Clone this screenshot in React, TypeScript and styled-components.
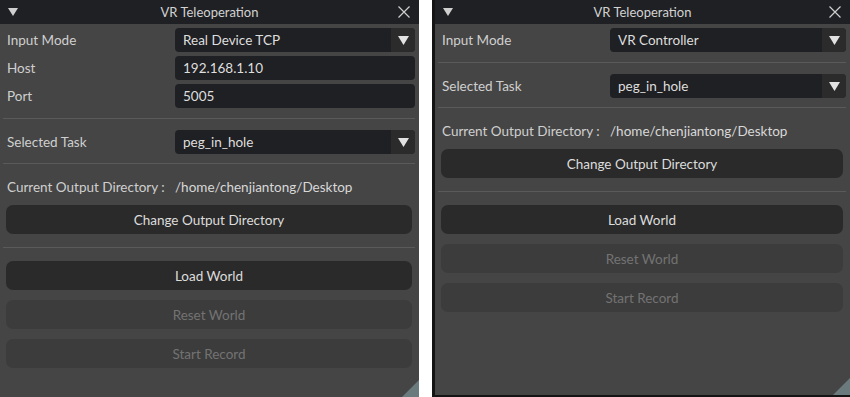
import React from "react";
import styled, { createGlobalStyle } from "styled-components";

const Global = createGlobalStyle`
  html, body { margin: 0; padding: 0; background: #ffffff; }
  body { font-family: Lato, "Open Sans", sans-serif; }
  * { box-sizing: border-box; }
`;

const Page = styled.div`
  display: flex;
  gap: 13px;
  width: 850px;
  height: 397px;
  overflow: hidden;
`;

const Window = styled.div<{ $framed?: boolean }>`
  position: relative;
  display: flex;
  flex-direction: column;
  width: ${(p) => (p.$framed ? 418 : 419)}px;
  height: 397px;
  background: #454545;
  border-left: ${(p) => (p.$framed ? "3px solid #141414" : "none")};
  border-bottom: ${(p) => (p.$framed ? "2px solid #141414" : "none")};
  overflow: hidden;
`;

const TitleBar = styled.div`
  position: relative;
  display: flex;
  align-items: center;
  justify-content: center;
  height: 24px;
  flex: none;
  background: #1f2023;
  color: #d2d2d2;
  font-size: 13px;
`;

const CollapseIcon = styled.svg`
  position: absolute;
  left: 8px;
  top: 8px;
`;

const CloseIcon = styled.svg`
  position: absolute;
  right: 9px;
  top: 6px;
`;

const Body = styled.div`
  display: flex;
  flex-direction: column;
  padding: 4px 4px 0 6px;
`;

const Row = styled.div`
  display: grid;
  grid-template-columns: 169px 1fr;
  align-items: center;
  height: 24px;
  & + & {
    margin-top: 4px;
  }
`;

const Label = styled.span`
  padding-left: 1px;
  color: #cfcfcf;
  font-size: 13.5px;
`;

const Field = styled.div`
  display: flex;
  align-items: center;
  height: 24px;
  padding-left: 8px;
  border-radius: 4px;
  background: #1f2023;
  color: #dedede;
  font-size: 13.5px;
`;

const Combo = styled(Field)`
  padding-right: 0;
  overflow: hidden;
  justify-content: space-between;
`;

const ComboArrow = styled.div`
  display: flex;
  align-items: center;
  justify-content: center;
  width: 24px;
  height: 100%;
  background: #2b2b2c;
`;

const Value = styled.span`
  color: #d8d8d8;
  font-size: 13.5px;
`;

const Separator = styled.div<{ $above: number; $below: number }>`
  height: 1px;
  margin: ${(p) => p.$above}px 0 ${(p) => p.$below}px -3px;
  background: #5a5a5a;
`;

const Button = styled.div<{ $disabled?: boolean; $gapAbove?: number }>`
  display: flex;
  align-items: center;
  justify-content: center;
  height: 29px;
  margin-right: 3px;
  margin-top: ${(p) => p.$gapAbove ?? 0}px;
  border-radius: 7px;
  background: ${(p) => (p.$disabled ? "#3c3c3c" : "#2a2a2a")};
  color: ${(p) => (p.$disabled ? "#737373" : "#dcdcdc")};
  font-size: 13.5px;
`;

const Grip = styled.svg`
  position: absolute;
  right: 0;
  bottom: 0;
`;

const Arrow = () => (
  <svg width="11" height="9" viewBox="0 0 11 9">
    <polygon points="0,0 11,0 5.5,9" fill="#e2e2e2" />
  </svg>
);

type Props = {
  framed?: boolean;
  mode: string;
  tcp?: boolean;
};

const Panel: React.FC<Props> = ({ framed, mode, tcp }) => (
  <Window $framed={framed}>
    <TitleBar>
      <CollapseIcon width="10" height="8" viewBox="0 0 10 8">
        <polygon points="0,0 10,0 5,8" fill="#cfcfcf" />
      </CollapseIcon>
      VR Teleoperation
      <CloseIcon width="12" height="12" viewBox="0 0 12 12">
        <path d="M0.5 0.5 L11.5 11.5 M11.5 0.5 L0.5 11.5" stroke="#cfcfcf" strokeWidth="1.2" />
      </CloseIcon>
    </TitleBar>
    <Body>
      <Row>
        <Label>Input Mode</Label>
        <Combo>
          {mode}
          <ComboArrow>
            <Arrow />
          </ComboArrow>
        </Combo>
      </Row>
      {tcp && (
        <>
          <Row>
            <Label>Host</Label>
            <Field>192.168.1.10</Field>
          </Row>
          <Row>
            <Label>Port</Label>
            <Field>5005</Field>
          </Row>
        </>
      )}
      <Separator $above={10} $below={11} />
      <Row>
        <Label>Selected Task</Label>
        <Combo>
          peg_in_hole
          <ComboArrow>
            <Arrow />
          </ComboArrow>
        </Combo>
      </Row>
      <Separator $above={9} $below={11} />
      <Row>
        <Label>Current Output Directory :</Label>
        <Value>/home/chenjiantong/Desktop</Value>
      </Row>
      <Button $gapAbove={6}>Change Output Directory</Button>
      <Separator $above={13} $below={13} />
      <Button>Load World</Button>
      <Button $disabled $gapAbove={10}>Reset World</Button>
      <Button $disabled $gapAbove={10}>Start Record</Button>
    </Body>
    <Grip width="17" height="17" viewBox="0 0 17 17">
      <polygon points="17,0 17,17 0,17" fill="#6b7a7c" />
    </Grip>
  </Window>
);

export default function App() {
  return (
    <>
      <Global />
      <Page>
        <Panel mode="Real Device TCP" tcp />
        <Panel framed mode="VR Controller" />
      </Page>
    </>
  );
}
